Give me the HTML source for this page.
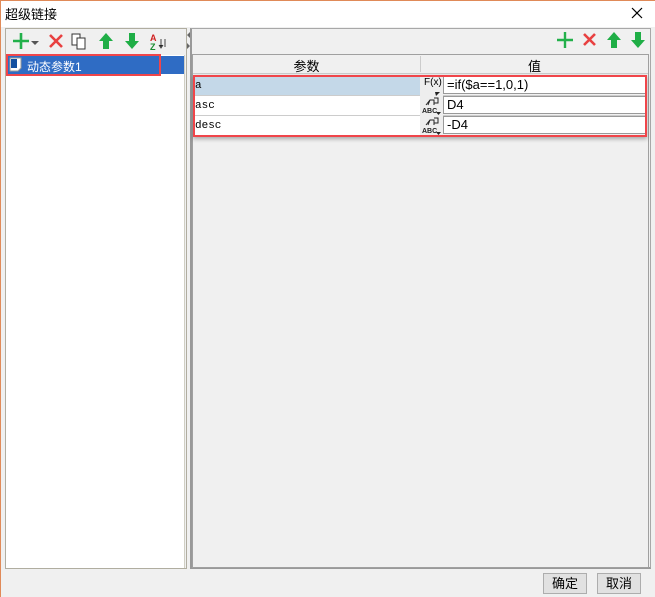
<!DOCTYPE html>
<html><head><meta charset="utf-8"><style>
*{margin:0;padding:0;box-sizing:border-box}
body{width:655px;height:597px;background:#f0f0f0;position:relative;overflow:hidden;font-family:"Liberation Sans","Noto Sans CJK SC",sans-serif;font-size:12px;color:#000}
.a{position:absolute}
.mono{font-family:"Liberation Mono","DejaVu Sans Mono",monospace;font-size:11px}
.v{font-size:13px}
</style></head><body>
<div class="a" style="left:0;top:0;width:655px;height:27px;background:#fff;border-top:1px solid #e08a58;border-left:1px solid #e08a58"></div>
<div class="a" style="left:0;top:0;width:1px;height:597px;background:#e08a58"></div>
<div class="a" style="left:5px;top:4px;font-size:13px">超级链接</div>
<svg class="a" style="left:631px;top:7px" width="12" height="12"><path d="M1 1L11 11M11 1L1 11" stroke="#000" stroke-width="1.2"/></svg>

<!-- left panel -->
<div class="a" style="left:5px;top:28px;width:182px;height:541px;border:1px solid #b0ada0;background:#f0f0f0"></div>
<div class="a" style="left:6px;top:55px;width:179px;height:513px;background:#fff;border-right:1px solid #d0cfc4"></div>
<svg class="a" style="left:10px;top:31px" width="170" height="20">
<path d="M11 2V18M3 10H19" stroke="#22b04a" stroke-width="2.6"/>
<path d="M21 10L29 10L25 14Z" fill="#555"/>
<path d="M40 4L52 16M52 4L40 16" stroke="#e84040" stroke-width="2.6"/>
<rect x="62" y="3" width="8" height="11" fill="#fff" stroke="#333"/><rect x="67" y="7" width="8" height="11" fill="#fff" stroke="#333"/>
<path d="M96 2L103 10H99V18H93V10H89Z" fill="#1fae46"/>
<path d="M122 18L129 10H125V2H119V10H115Z" fill="#1fae46"/>
<text x="140" y="10" font-size="9" fill="#d02020" font-family="Liberation Sans" font-weight="bold">A</text>
<text x="140" y="19" font-size="9" fill="#1a8a30" font-family="Liberation Sans" font-weight="bold">Z</text>
<path d="M151 8V16M149 14L151 17L153 14M155 8V16" stroke="#444" stroke-width="1"/>
</svg>
<div class="a" style="left:6px;top:56px;width:178px;height:18px;background:#2f6cc4"></div>
<div class="a" style="left:6px;top:54px;width:155px;height:22px;border:2px solid #f0454a"></div>
<svg class="a" style="left:9px;top:57px" width="14" height="15"><path d="M1 1H12V11L9 14H1Z" fill="#fff" stroke="#999"/><rect x="2" y="2" width="6" height="9" fill="#1450a0"/></svg>
<div class="a" style="left:27px;top:58px;color:#fff;font-size:12px">动态参数1</div>
<svg class="a" style="left:186px;top:31px" width="5" height="20"><path d="M4 1V7L1 4Z M1 12V18L4 15Z" fill="#666"/></svg>

<!-- right panel -->
<div class="a" style="left:190px;top:28px;width:461px;height:541px;border:1px solid #a8a8a8;border-bottom:2px solid #999;border-left:2px solid #999"></div>
<svg class="a" style="left:555px;top:31px" width="92" height="18">
<path d="M10 1V17M2 9H18" stroke="#22b04a" stroke-width="2.4"/>
<path d="M29 3L40 14M40 3L29 14" stroke="#e84040" stroke-width="2.6"/>
<path d="M59 1L66 9H62V17H56V9H52Z" fill="#1fae46"/>
<path d="M83 17L90 9H86V1H80V9H76Z" fill="#1fae46"/>
</svg>
<div class="a" style="left:192px;top:54px;width:457px;height:514px;border:1px solid #a0a0a0;background:#f0f0f0"></div>
<div class="a" style="left:193px;top:55px;width:455px;height:19px;background:#f0f0f0;border-bottom:1px solid #ccc"></div>
<div class="a v" style="left:193px;top:56px;width:227px;text-align:center">参数</div>
<div class="a" style="left:420px;top:56px;width:1px;height:16px;background:#ccc"></div>
<div class="a v" style="left:421px;top:56px;width:227px;text-align:center">值</div>
<!-- rows -->
<div class="a" style="left:193px;top:76px;width:227px;height:19px;background:#c4d8e8"></div>
<div class="a" style="left:193px;top:96px;width:227px;height:19px;background:#fff"></div>
<div class="a" style="left:193px;top:116px;width:227px;height:19px;background:#fff"></div>
<div class="a" style="left:193px;top:95px;width:454px;height:1px;background:#ccc"></div>
<div class="a" style="left:193px;top:115px;width:454px;height:1px;background:#ccc"></div>
<div class="a mono" style="left:195px;top:80px">a</div>
<div class="a mono" style="left:195px;top:100px">asc</div>
<div class="a mono" style="left:195px;top:120px">desc</div>
<div class="a" style="left:420px;top:76px;width:23px;height:59px;background:#eee"></div>
<div class="a" style="left:424px;top:77px;font-size:10px">F(x)</div>
<svg class="a" style="left:421px;top:76px" width="22" height="60">
<path d="M14 15L19 15L15 19Z" fill="#222" transform="translate(0,1)"/>
<g id="abc"><path d="M5 29L9 24H13V29M9 24L7 29M13 22H17V27H13" fill="none" stroke="#222" stroke-width="1"/>
<text x="1" y="37" font-size="7" font-weight="bold" font-family="Liberation Sans" fill="#222">ABC</text>
<path d="M15 36L20 36L17.5 39Z" fill="#222"/></g>
<use href="#abc" y="20"/>
</svg>
<div class="a" style="left:443px;top:76px;width:203px;height:18px;background:#fff;border:1px solid #999"></div>
<div class="a" style="left:443px;top:96px;width:203px;height:18px;background:#fff;border:1px solid #999"></div>
<div class="a" style="left:443px;top:116px;width:203px;height:18px;background:#fff;border:1px solid #999"></div>
<div class="a v" style="left:447px;top:77px">=if($a==1,0,1)</div>
<div class="a v" style="left:447px;top:97px">D4</div>
<div class="a v" style="left:447px;top:117px">-D4</div>
<div class="a" style="left:193px;top:75px;width:454px;height:62px;border:2px solid #f0454a;box-shadow:0 2px 4px rgba(0,0,0,.3)"></div>

<div class="a" style="left:543px;top:573px;width:44px;height:21px;border:1px solid #adadad;background:#e1e1e1;text-align:center;line-height:19px;font-size:13px">确定</div>
<div class="a" style="left:597px;top:573px;width:44px;height:21px;border:1px solid #adadad;background:#e1e1e1;text-align:center;line-height:19px;font-size:13px">取消</div>
</body></html>
